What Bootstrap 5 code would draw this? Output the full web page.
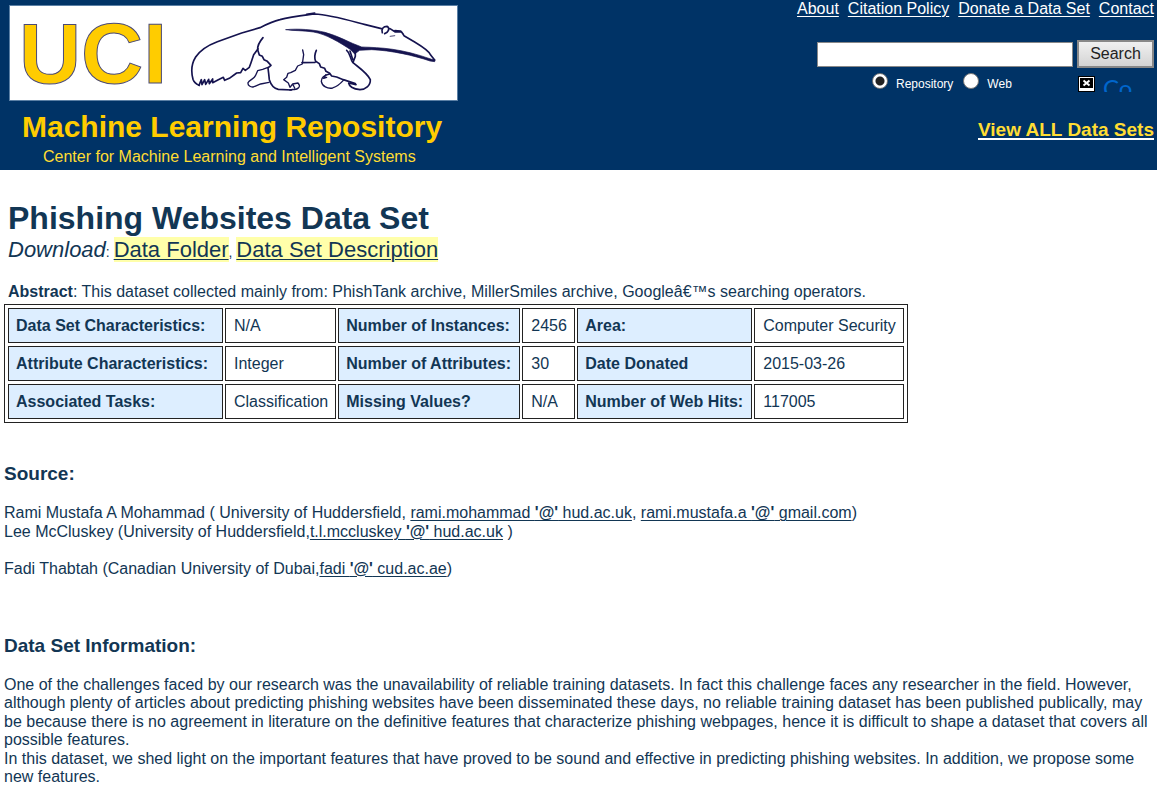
<!DOCTYPE html>
<html lang="en">
<head>
<meta charset="utf-8">
<meta name="viewport" content="width=device-width, initial-scale=1">
<title>UCI Machine Learning Repository: Phishing Websites Data Set</title>
<link rel="stylesheet" href="https://cdn.jsdelivr.net/npm/bootstrap@5.3.0/dist/css/bootstrap.min.css">
<style>
body { font-family: "Liberation Sans", Arial, sans-serif; font-size: 16px; line-height: 1.15; color: #123654; background: #fff; }
a, a:hover { color: inherit; text-decoration-thickness: 1px; text-underline-offset: 2px; }
.masthead { background: #036; color: #fff; margin-right: 3px; padding: 0 3px 2px 9px; }
.brand { padding-top: 5px; }
.logo { width: 449px; height: 96px; margin-bottom: 8px; max-width: 100%; }
.brand-title { color: #fc0; font-size: 30px; font-weight: 700; line-height: 36px; padding-left: 13px; }
.brand-sub { color: #fd3; line-height: 22px; padding: 1px 0 0 34px; }
.top-nav { gap: 9px; line-height: 18px; margin-bottom: 22px; }
.finder { width: 337px; }
.query { height: 25px; border: 1px solid #888; background: #fff; color: #222; min-width: 0; }
.go { width: 77px; height: 28px; border: 2px solid #888; background: linear-gradient(#f0f0f0, #d4d4d4); color: #222; line-height: 1; padding: 0; }
.scope { font-size: 12px; line-height: 14px; height: 24px; padding: 5px 0 0 55px; }
.pick { appearance: none; width: 16px; height: 16px; border: 1px solid #777; border-radius: 50%; background: #fff; margin: 0 8px 0 0; }
.pick:checked { background: radial-gradient(circle, #222 0 4px, #fff 5px); }
.scope label { padding-top: 4px; margin-right: 10px; }
.engine { width: 76px; height: 16px; overflow: hidden; }
.engine-name { color: #06c; font: 400 24px/24px Lato, sans-serif; margin-left: 8px; }
.view-all { font-size: 19px; line-height: 24px; color: #fd3; margin-top: 26px; }
.view-all a { text-decoration: underline 2px #fff; }
main { padding: 29px 4px 16px; }
h1 { font-size: 32px; font-weight: 700; line-height: 38px; margin: 0; }
h2 { font-size: 19px; font-weight: 700; line-height: 22px; margin: 0 0 19px; }
.intro { padding-left: 4px; }
.download { font-size: 14px; line-height: 25px; margin-bottom: 18px; }
.download em, .download a { font-size: 22px; }
.hl { background: #ffa; }
.facts { border: 1px solid #222; border-collapse: separate; border-spacing: 2px 3px; padding: 0 1px; width: 904px; max-width: 100%; margin: 3px 0 40px; }
.facts th, .facts td { border: 1px solid #222; padding: 7px; line-height: 19px; }
.facts td { padding-left: 8px; }
.facts th { background: #def; }
.c-trait { width: 215px; }
.c-kind { width: 111px; }
.c-count { width: 182px; }
.c-num { width: 53px; }
.c-about { width: 175px; }
.source { margin-bottom: 57px; }
</style>
</head>
<body>
<header class="masthead d-flex justify-content-between align-items-start">
  <div class="brand">
    <a href="#" class="d-block">
      <svg class="logo d-block" viewBox="0 0 449 96" role="img" aria-label="UCI anteater">
        <rect x=".5" y=".5" width="448" height="95" fill="#fff" stroke="#5b80a5"/>
        <text x="10" y="78" font-family="Liberation Sans, Arial, sans-serif" font-weight="700" font-size="86" fill="#fc0" stroke="#4a4a78" stroke-width="1">UCI</text>
        <g transform="translate(171 -5) scale(.3333)" fill="none" stroke="#15134f" stroke-width="5" stroke-linecap="round" stroke-linejoin="round">
          <path d="M57 256C48 252 42 248 39 238C32 212 35 190 47 171C62 148 88 134 112 125L162 107L185 99L240 83C262 72 280 64 300 59C332 50 364 47 404 42C452 44 510 62 556 74L604 86"/>
          <path d="M380 43L404 39"/>
          <path d="M57 256L64 239L66 254L74 239L77 253L86 238L88 251L98 237L98 248L115 239L130 232L134 241L148 235L170 219L182 218L189 205L196 211L208 202L213 188L221 164L234 147"/>
          <path d="M249 113C238 126 232 136 233 149L238 165L247 169L252 179L262 184L273 196L264 204L266 220L268 239C272 252 281 265 295 268L335 270"/>
          <path d="M264 202L248 208L233 212L227 226C222 238 208 239 204 248C203 257 212 262 220 261L242 252L267 247" stroke-width="4"/>
          <path d="M368 150L371 164L367 192L353 198L346 211L332 218L324 220L320 232L311 239L325 249L330 262L338 252L354 249C364 259 354 271 338 268L330 270M338 252L344 264" stroke-width="4"/>
          <path d="M366 188L405 187M409 151C403 164 403 174 407 184L418 191L422 201L434 205L438 214L449 220L455 228L470 231L490 239L526 251"/>
          <path d="M449 222C434 225 424 232 424 244C426 259 443 267 458 264C472 259 482 250 490 241" stroke-width="4"/>
          <path d="M438 224L431 235L440 232" stroke-width="4"/>
          <path d="M500 151C512 160 509 174 519 188C538 204 562 219 571 239C572 257 556 269 540 269C522 267 508 260 506 249L528 254"/>
          <path d="M526 151L526 169L519 187M510 153L518 178"/>
          <path fill="#15134f" stroke-width="2" d="M318 89C353 85 402 89 435 97C474 107 510 129 545 141C604 143 663 145 755 178L765 179L764 185L750 183C704 167 632 151 575 149L539 151L524 162L512 149C480 128 438 102 400 96C370 91 342 93 318 89Z"/>
          <path d="M607 98C603 86 611 79 621 79C632 85 624 98 614 101M630 86L646 96L665 96L672 107L704 126C724 138 748 153 752 165L764 180M645 92L662 93L670 103"/>
          <path d="M631 109L644 107" stroke-width="4" opacity=".6"/>
        </g>
      </svg>
    </a>
    <div class="brand-title">Machine Learning Repository</div>
    <div class="brand-sub"><a href="#" class="text-decoration-none">Center for Machine Learning and Intelligent Systems</a></div>
  </div>
  <div class="d-flex flex-column align-items-end">
    <nav class="top-nav d-flex" aria-label="Site">
      <a href="#">About</a>
      <a href="#">Citation Policy</a>
      <a href="#">Donate a Data Set</a>
      <a href="#">Contact</a>
    </nav>
    <form class="finder">
      <div class="d-flex align-items-center">
        <input class="query flex-grow-1" type="text" aria-label="Search terms">
        <button class="go ms-1 flex-shrink-0" type="button">Search</button>
      </div>
      <div class="d-flex justify-content-between align-items-start">
        <div class="scope d-flex align-items-start">
          <input class="pick" type="radio" name="scope" id="scope-repo" checked>
          <label for="scope-repo">Repository</label>
          <input class="pick" type="radio" name="scope" id="scope-web">
          <label for="scope-web">Web</label>
        </div>
        <div class="engine d-flex mt-2">
          <svg class="flex-shrink-0" width="17" height="16" viewBox="0 0 17 16" aria-hidden="true">
            <rect width="17" height="16" fill="#000"/>
            <rect x="1.5" y="1.5" width="14" height="13" fill="#000" stroke="#fff"/>
            <path d="M2 13h13" stroke="#fff" stroke-width="2"/>
            <path d="M5.500 4.500l6 5M11.500 4.500l-6 5" stroke="#fff" stroke-width="2"/>
          </svg>
          <span class="engine-name">Co</span>
        </div>
      </div>
    </form>
    <div class="view-all fw-bold"><a href="#">View ALL Data Sets</a></div>
  </div>
</header>

<main>
  <div class="intro">
    <h1>Phishing Websites Data Set</h1>
    <p class="download"><em>Download</em>: <a class="hl" href="#">Data Folder</a>, <a class="hl" href="#">Data Set Description</a></p>
    <p class="mb-0"><b>Abstract</b>: This dataset collected mainly from: PhishTank archive, MillerSmiles archive, Googleâ€™s searching operators.</p>
  </div>

  <table class="facts">
    <colgroup><col class="c-trait"><col class="c-kind"><col class="c-count"><col class="c-num"><col class="c-about"><col></colgroup>
    <tbody>
      <tr><th scope="row">Data Set Characteristics:</th><td>N/A</td><th scope="row">Number of Instances:</th><td>2456</td><th scope="row">Area:</th><td>Computer Security</td></tr>
      <tr><th scope="row">Attribute Characteristics:</th><td>Integer</td><th scope="row">Number of Attributes:</th><td>30</td><th scope="row">Date Donated</th><td>2015-03-26</td></tr>
      <tr><th scope="row">Associated Tasks:</th><td>Classification</td><th scope="row">Missing Values?</th><td>N/A</td><th scope="row">Number of Web Hits:</th><td>117005</td></tr>
    </tbody>
  </table>

  <section>
    <h2>Source:</h2>
    <p class="source">Rami Mustafa A Mohammad ( University of Huddersfield, <a href="#">rami.mohammad <b>'@'</b> hud.ac.uk</a>, <a href="#">rami.mustafa.a <b>'@'</b> gmail.com</a>)<br>
    Lee McCluskey (University of Huddersfield,<a href="#">t.l.mccluskey <b>'@'</b> hud.ac.uk</a> )<br><br>
    Fadi Thabtah (Canadian University of Dubai,<a href="#">fadi <b>'@'</b> cud.ac.ae</a>)</p>
  </section>

  <section>
    <h2>Data Set Information:</h2>
    <p class="mb-0">One of the challenges faced by our research was the unavailability of reliable training datasets. In fact this challenge faces any researcher in the field. However, although plenty of articles about predicting phishing websites have been disseminated these days, no reliable training dataset has been published publically, may be because there is no agreement in literature on the definitive features that characterize phishing webpages, hence it is difficult to shape a dataset that covers all possible features.<br>
    In this dataset, we shed light on the important features that have proved to be sound and effective in predicting phishing websites. In addition, we propose some new features.</p>
  </section>
</main>
<script src="https://cdn.jsdelivr.net/npm/bootstrap@5.3.0/dist/js/bootstrap.bundle.min.js"></script>
</body>
</html>
